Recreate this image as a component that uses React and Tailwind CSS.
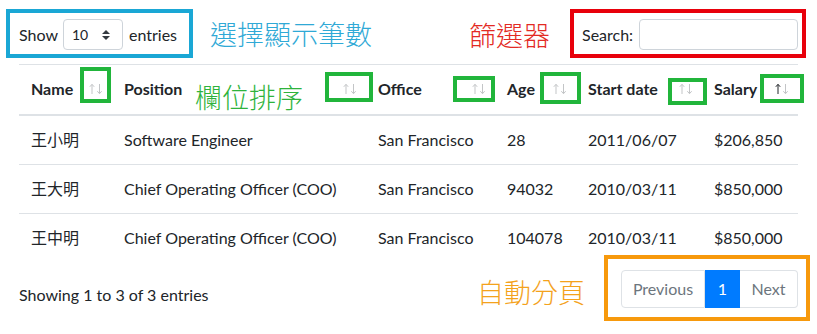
import React from "react";

const columns = [
  { title: "Name", width: "w-[93px]", box: "left-[61px] top-[2px] w-[31px] h-[36px]" },
  { title: "Position", width: "w-[254px]", box: "left-[213px] top-[7px] w-[48px] h-[30px]" },
  { title: "Office", width: "w-[129px]", box: "left-[87px] top-[11px] w-[42px] h-[26px]" },
  { title: "Age", width: "w-[81px]", box: "left-[45px] top-[7px] w-[41px] h-[32px]" },
  { title: "Start date", width: "w-[126px]", box: "left-[92px] top-[13px] w-[39px] h-[27px]" },
  { title: "Salary", width: "w-[96px]", box: "left-[58px] top-[9px] w-[44px] h-[29px]", sorted: true },
];

const rows = [
  ["王小明", "Software Engineer", "San Francisco", "28", "2011/06/07", "$206,850"],
  ["王大明", "Chief Operating Officer (COO)", "San Francisco", "94032", "2010/03/11", "$850,000"],
  ["王中明", "Chief Operating Officer (COO)", "San Francisco", "104078", "2010/03/11", "$850,000"],
];

// little up/down arrows used by the sortable headers
const SortArrows = ({ sorted }) => (
  <svg width="14" height="12" viewBox="0 0 14 12" fill="none" strokeWidth="1">
    <g stroke={sorted ? "#212529" : "#c3c5c7"}>
      <path d="M3 11V1.5" />
      <path d="M0.8 3.8L3 1.3L5.2 3.8" />
    </g>
    <g stroke="#c3c5c7">
      <path d="M10.5 1V10.5" />
      <path d="M8.3 8.2L10.5 10.7L12.7 8.2" />
    </g>
  </svg>
);

const App = () => {
  return (
    <div
      className="relative w-[817px] h-[334px] overflow-hidden bg-white text-[#212529] text-[16px]"
      style={{ fontFamily: "Lato, 'Noto Sans CJK TC', sans-serif" }}
    >
      {/* top controls */}
      <div className="flex items-start pt-[9px] pl-[6px] pr-[11px]">
        <div className="flex items-center w-[187px] h-[49px] border-4 border-[#1aa7d5] pl-[9px] pt-[2px]">
          <span>Show</span>
          <div className="flex items-center justify-between w-[60px] h-[31px] ml-[5px] pl-[8px] pr-[12px] border border-[#ced4da] rounded-[4px] text-[14px]">
            <span>10</span>
            <svg width="8" height="10" viewBox="0 0 4 5">
              <path d="M2 0L0 2h4zm0 5L0 3h4z" fill="#343a40" />
            </svg>
          </div>
          <span className="ml-[6px]">entries</span>
        </div>
        <div className="ml-[17px] mt-[12px] text-[27px] leading-none text-[#2fa9d6] font-light">選擇顯示筆數</div>

        <div className="ml-auto mt-[13px] text-[27px] leading-none text-[#e32a24] font-light">篩選器</div>
        <div className="flex items-center w-[236px] h-[49px] ml-[20px] border-4 border-[#e8000b] pl-[8px] pt-[2px]">
          <span>Search:</span>
          <input className="w-[159px] h-[31px] ml-[6px] border border-[#ced4da] rounded-[4px] outline-none" />
        </div>
      </div>

      {/* table */}
      <div className="mt-[6px] px-[19px]">
        <table className="w-[779px] table-fixed">
          <thead>
            <tr>
              {columns.map((col) => (
                <th
                  key={col.title}
                  className={`relative ${col.width} px-3 pt-3 pb-[13px] leading-6 text-left font-bold border-t border-b-2 border-[#dee2e6]`}
                >
                  {col.title}
                  <span className="absolute right-[9px] top-[18px] flex">
                    <SortArrows sorted={col.sorted} />
                  </span>
                  <span className={`absolute ${col.box} border-4 border-[#21b53b]`} />
                </th>
              ))}
            </tr>
          </thead>
          <tbody>
            {rows.map((row, i) => (
              <tr key={i} className={i > 0 ? "border-t border-[#dee2e6]" : ""}>
                {row.map((cell, j) => (
                  <td key={j} className="px-3 py-3 leading-6 whitespace-nowrap">
                    {cell}
                  </td>
                ))}
              </tr>
            ))}
          </tbody>
        </table>
      </div>

      {/* footer */}
      <div className="flex items-start pl-[19px] pr-[7px]">
        <div className="mt-[21px] leading-6">Showing 1 to 3 of 3 entries</div>
        <div className="ml-auto flex items-start mt-[-7px]">
          <div className="mt-[24px] mr-[19px] text-[27px] leading-[27px] text-[#f4a21c] font-light">自動分頁</div>
          <div className="w-[206px] h-[66px] border-4 border-[#f7990c] pt-[11px] pl-[13px]">
            <div className="flex h-[38px]">
              <div className="flex items-center justify-center w-[84px] border border-[#dee2e6] rounded-l-[4px] text-[#6c757d]">Previous</div>
              <div className="flex items-center justify-center w-[35px] bg-[#007bff] border border-[#007bff] text-white">1</div>
              <div className="flex items-center justify-center w-[58px] border border-[#dee2e6] border-l-0 rounded-r-[4px] text-[#6c757d]">Next</div>
            </div>
          </div>
        </div>
      </div>

      {/* annotation over the header */}
      <div className="absolute left-[195px] top-[84px] text-[27px] leading-none text-[#2eb33c] font-light">欄位排序</div>
    </div>
  );
};

export default App;
